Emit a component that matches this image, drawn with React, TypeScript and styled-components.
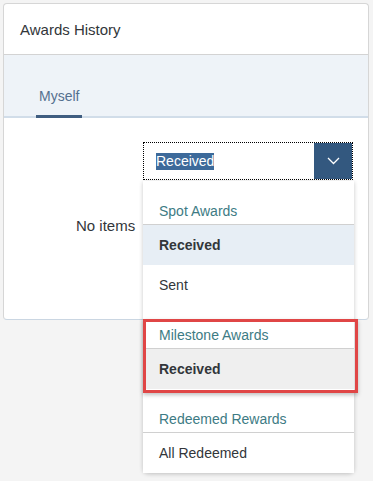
import React from "react";
import styled, { createGlobalStyle } from "styled-components";

const GlobalStyle = createGlobalStyle`
  html, body {
    margin: 0;
    padding: 0;
    background: #f4f4f4;
    font-family: "Liberation Sans", Arial, sans-serif;
    color: #32363a;
  }
`;

const Page = styled.div`
  padding: 3px;
  width: 373px;
  height: 481px;
  box-sizing: border-box;
`;

const Card = styled.div`
  width: 366px;
  height: 317px;
  box-sizing: border-box;
  background: #fff;
  border: 1px solid #d6d6d6;
  border-bottom-color: #cad6e2;
  border-radius: 4px;
  display: flex;
  flex-direction: column;
`;

const CardHeader = styled.div`
  height: 50px;
  display: flex;
  align-items: center;
  padding: 0 16px;
  font-size: 15px;
  border-bottom: 1px solid #d3d3d3;
`;

const TabBar = styled.div`
  height: 63px;
  background: #eef3f8;
  border-bottom: 2px solid #d1dde9;
  box-sizing: border-box;
  display: flex;
  align-items: flex-end;
  padding-left: 32px;
`;

const Tab = styled.div<{ $active?: boolean }>`
  font-size: 14px;
  color: #55708f;
  padding: 0 3px 11px;
  margin-bottom: -2px;
  border-bottom: 3px solid ${(p) => (p.$active ? "#3f5d80" : "transparent")};
`;

const Body = styled.div`
  flex: 1;
  display: flex;
  flex-direction: column;
  padding: 24px 15px 0;
`;

const SelectRow = styled.div`
  display: flex;
  justify-content: flex-end;
`;

const SelectWrap = styled.div`
  position: relative;
  width: 210px;
`;

const SelectBox = styled.div`
  height: 38px;
  display: flex;
  border: 1px dotted #000;
  box-sizing: border-box;
  background: #fff;
`;

const SelectValue = styled.div`
  flex: 1;
  display: flex;
  align-items: center;
  padding-left: 12px;
  font-size: 14px;
`;

const Selected = styled.span`
  background: #3d6a9a;
  color: #fff;
  line-height: 17px;
`;

const SelectButton = styled.div`
  width: 38px;
  background: #33587f;
  display: flex;
  align-items: center;
  justify-content: center;
`;

const EmptyText = styled.div`
  font-size: 15px;
  padding: 37px 0 0 57px;
`;

const List = styled.div`
  position: absolute;
  top: 39px;
  left: 0;
  width: 211px;
  background: #fff;
  border-radius: 0 0 5px 5px;
  box-shadow: 0 1px 4px rgba(0, 0, 0, 0.22);
  z-index: 2;
`;

const GroupHeader = styled.div`
  padding: 20px 16px 3px;
  line-height: 20px;
  font-size: 14px;
  color: #3d7b84;
  border-bottom: 1px solid #d0d0d0;
`;

const Item = styled.div<{ $bg?: string; $bold?: boolean }>`
  height: 40px;
  display: flex;
  align-items: center;
  padding: 0 16px;
  font-size: 14px;
  font-weight: ${(p) => (p.$bold ? 700 : 400)};
  background: ${(p) => p.$bg || "#fff"};
  color: #32363a;
`;

const Highlight = styled.div`
  position: absolute;
  top: 138px;
  left: 0;
  width: 215px;
  height: 74px;
  box-sizing: border-box;
  border: 3px solid #e04646;
  box-shadow: 0 2px 4px rgba(0, 0, 0, 0.25);
  pointer-events: none;
  z-index: 3;
`;

const Chevron = () => (
  <svg width="13" height="8" viewBox="0 0 13 8" fill="none">
    <path d="M1 1l5.5 5.5L12 1" stroke="#fff" strokeWidth="1.3" />
  </svg>
);

export default function App() {
  return (
    <>
      <GlobalStyle />
      <Page>
        <Card>
          <CardHeader>Awards History</CardHeader>
          <TabBar>
            <Tab $active>Myself</Tab>
          </TabBar>
          <Body>
            <SelectRow>
              <SelectWrap>
                <SelectBox>
                  <SelectValue>
                    <Selected>Received</Selected>
                  </SelectValue>
                  <SelectButton>
                    <Chevron />
                  </SelectButton>
                </SelectBox>
                <List>
                  <GroupHeader>Spot Awards</GroupHeader>
                  <Item $bold $bg="#e7eef5">Received</Item>
                  <Item>Sent</Item>
                  <GroupHeader>Milestone Awards</GroupHeader>
                  <Item $bold $bg="#efefef">Received</Item>
                  <GroupHeader>Redeemed Rewards</GroupHeader>
                  <Item>All Redeemed</Item>
                  <Highlight />
                </List>
              </SelectWrap>
            </SelectRow>
            <EmptyText>No items</EmptyText>
          </Body>
        </Card>
      </Page>
    </>
  );
}
